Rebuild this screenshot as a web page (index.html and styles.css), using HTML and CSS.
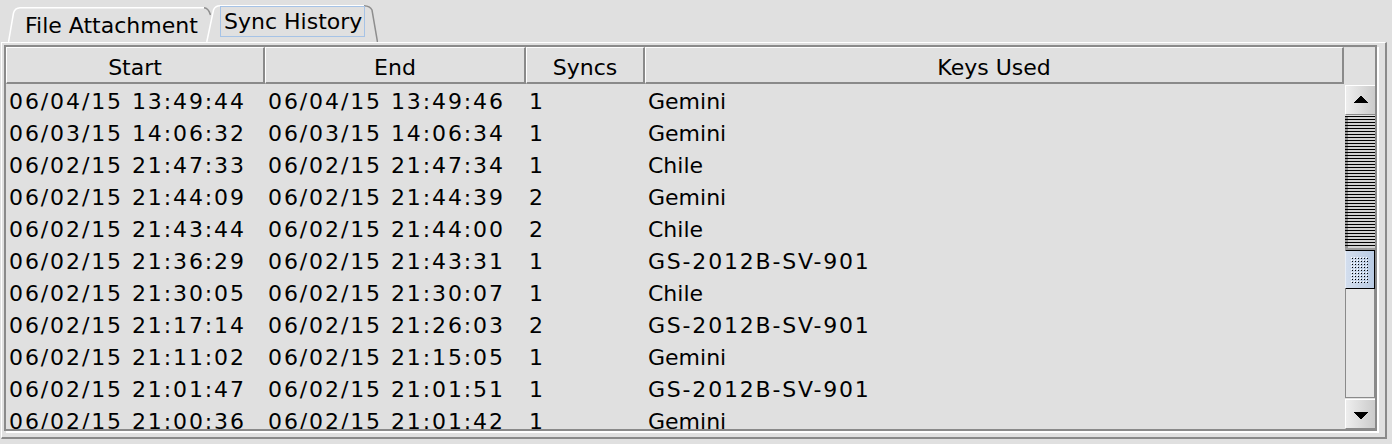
FILE: index.html
```html
<!DOCTYPE html>
<html>

<head>
  <meta charset="UTF-8">
  <meta name="viewport" content="width=device-width, initial-scale=1">
  <title>Sync History</title>
  <link rel="stylesheet" href="styles.css">
</head>

<body>
  <div class="tabs">
    <div class="tab">
      <svg class="tab-edge" width="203" height="35" viewBox="0 0 203 35">
        <path d="M0.5 35 L5.5 6 Q7 1 12 0.75 H196" fill="none" stroke="#fff" stroke-width="1.5"/>
        <path d="M196 0.75 Q200.5 1 202.5 8" fill="none" stroke="#8e8e8e" stroke-width="1.5"/>
      </svg>
      <span class="tab-label">File Attachment</span>
    </div>
    <div class="tab active">
      <svg class="tab-edge" width="172" height="37" viewBox="0 0 172 37">
        <path d="M0 37 L7 5 Q9 0 14 0 H158 Q164 0 166 5 L172 37 Z" fill="#e0e0e0"/>
        <path d="M0.75 37 L7.5 5 Q9 0.75 14 0.75 H158" fill="none" stroke="#fff" stroke-width="1.5"/>
        <path d="M158 0.75 Q164 1 166 5 L171.5 37" fill="none" stroke="#8e8e8e" stroke-width="1.5"/>
      </svg>
      <span class="tab-label focus">Sync History</span>
    </div>
  </div>

  <div class="panel">
    <div class="scrollpane">
      <div class="thead">
        <div class="th">Start</div>
        <div class="th">End</div>
        <div class="th">Syncs</div>
        <div class="th">Keys Used</div>
      </div>
      <div class="corner"></div>

      <div class="tbody">
        <div class="row"><div class="td t">06/04/15 13:49:44</div><div class="td t">06/04/15 13:49:46</div><div class="td">1</div><div class="td">Gemini</div></div>
        <div class="row"><div class="td t">06/03/15 14:06:32</div><div class="td t">06/03/15 14:06:34</div><div class="td">1</div><div class="td">Gemini</div></div>
        <div class="row"><div class="td t">06/02/15 21:47:33</div><div class="td t">06/02/15 21:47:34</div><div class="td">1</div><div class="td">Chile</div></div>
        <div class="row"><div class="td t">06/02/15 21:44:09</div><div class="td t">06/02/15 21:44:39</div><div class="td">2</div><div class="td">Gemini</div></div>
        <div class="row"><div class="td t">06/02/15 21:43:44</div><div class="td t">06/02/15 21:44:00</div><div class="td">2</div><div class="td">Chile</div></div>
        <div class="row"><div class="td t">06/02/15 21:36:29</div><div class="td t">06/02/15 21:43:31</div><div class="td">1</div><div class="td code">GS-2012B-SV-901</div></div>
        <div class="row"><div class="td t">06/02/15 21:30:05</div><div class="td t">06/02/15 21:30:07</div><div class="td">1</div><div class="td">Chile</div></div>
        <div class="row"><div class="td t">06/02/15 21:17:14</div><div class="td t">06/02/15 21:26:03</div><div class="td">2</div><div class="td code">GS-2012B-SV-901</div></div>
        <div class="row"><div class="td t">06/02/15 21:11:02</div><div class="td t">06/02/15 21:15:05</div><div class="td">1</div><div class="td">Gemini</div></div>
        <div class="row"><div class="td t">06/02/15 21:01:47</div><div class="td t">06/02/15 21:01:51</div><div class="td">1</div><div class="td code">GS-2012B-SV-901</div></div>
        <div class="row"><div class="td t">06/02/15 21:00:36</div><div class="td t">06/02/15 21:01:42</div><div class="td">1</div><div class="td">Gemini</div></div>
      </div>

      <div class="scrollbar">
        <div class="sb-btn">
          <svg width="16" height="7" viewBox="0 0 16 7" shape-rendering="crispEdges"><path d="M0 7 L8 0 L16 7 Z" fill="#000"/></svg>
        </div>
        <div class="sb-stripes"></div>
        <div class="sb-gap"></div>
        <div class="sb-grip">
          <svg width="18" height="26" viewBox="0 0 18 26" shape-rendering="crispEdges">
            <defs>
              <pattern id="dots" width="6" height="6" patternUnits="userSpaceOnUse">
                <rect x="0" y="0" width="1" height="1" fill="#fff"/>
                <rect x="1" y="1" width="1" height="1" fill="#000"/>
                <rect x="3" y="3" width="1" height="1" fill="#fff"/>
                <rect x="4" y="4" width="1" height="1" fill="#000"/>
                <rect x="3" y="0" width="1" height="1" fill="#fff"/>
                <rect x="4" y="1" width="1" height="1" fill="#000"/>
                <rect x="0" y="3" width="1" height="1" fill="#fff"/>
                <rect x="1" y="4" width="1" height="1" fill="#000"/>
              </pattern>
            </defs>
            <rect width="18" height="26" fill="url(#dots)"/>
          </svg>
        </div>
        <div class="sb-track"></div>
        <div class="sb-btn down">
          <svg width="16" height="7" viewBox="0 0 16 7" shape-rendering="crispEdges"><path d="M0 0 L16 0 L8 7 Z" fill="#000"/></svg>
        </div>
      </div>
    </div>
  </div>
</body>

</html>
```

FILE: styles.css
```css
*{
  box-sizing: border-box;
  margin: 0;
  padding: 0;
}

body{
  background: #e0e0e0;
  font-family: "DejaVu Sans", Verdana, sans-serif;
  font-size: 22px;
  color: #000;
  width: 1392px;
  height: 444px;
  overflow: hidden;
}

/* tab strip */
.tabs{
  display: flex;
  align-items: flex-end;
  height: 42px;
  padding-left: 8px;
}
.tab{
  position: relative;
  width: 203px;
  height: 35px;
  padding: 3px 0 0 17px;
  line-height: 32px;
  white-space: nowrap;
}
.tab.active{
  width: 172px;
  height: 37px;
  margin-left: -5px;
  padding: 1px 0 0 14px;
  line-height: 29px;
}
.tab-edge{
  position: absolute;
  left: 0;
  top: 0;
}
.tab-label{
  position: relative;
  display: inline-block;
}
.tab-label.focus{
  border: 1px solid #a6c3e6;
  height: 31px;
  width: 145px;
  padding-left: 3px;
}

/* content panel */
.panel{
  margin-left: 1px;
  width: 1386px;
  height: 397px;
  border-top: 1px solid #fff;
  border-left: 1px solid #fff;
  border-right: 2px solid #8a8a8a;
  border-bottom: 2px solid #8a8a8a;
  padding: 2px 0 0 2px;
}
.scrollpane{
  width: 1373px;
  height: 386px;
  border: 2px solid #8a8a8a;
  box-shadow: 2px 2px 0 #fff;
  display: grid;
  grid-template-columns: 1338px 31px;
  grid-template-rows: 37px 345px;
}

.thead, .row{
  display: grid;
  grid-template-columns: 259px 261px 119px 699px;
}
.th{
  height: 37px;
  border-top: 1px solid #fff;
  border-left: 1px solid #fff;
  border-right: 2px solid #8a8a8a;
  border-bottom: 2px solid #8a8a8a;
  padding-top: 6px;
  line-height: 28px;
  text-align: center;
}
.corner{
  background: #e0e0e0;
}

.tbody{
  overflow: hidden;
}
.row{
  height: 32px;
  line-height: 35px;
}
.td{
  padding-left: 3px;
  white-space: nowrap;
  overflow: hidden;
}
.td.t{
  letter-spacing: 1.9px;
}
.td.code{
  letter-spacing: 1.8px;
}

/* scrollbar */
.scrollbar{
  display: flex;
  flex-direction: column;
  padding: 1px 0 0 1px;
}
.sb-btn{
  height: 30px;
  flex: none;
  display: flex;
  align-items: center;
  justify-content: center;
  padding-bottom: 2px;
  border-top: 1px solid #fff;
  border-left: 1px solid #fff;
  border-bottom: 1px solid #8a8a8a;
  background: linear-gradient(to right, #eeeeee, #cbcbcb);
}
.sb-btn.down{
  margin-top: 1px;
  padding: 2px 0 0 0;
}
.sb-stripes{
  height: 132px;
  flex: none;
  margin-top: 1px;
  background:
    linear-gradient(to right, rgba(0,0,0,.3) 0 3px, transparent 3px),
    repeating-linear-gradient(to bottom, #000 0 1px, #d2d2d2 1px 3px);
}
.sb-gap{
  height: 2px;
  flex: none;
  background: #9a9a9a;
}
.sb-grip{
  height: 39px;
  flex: none;
  display: flex;
  align-items: center;
  justify-content: center;
  border-top: 1px solid #000;
  border-right: 1px solid #000;
  border-bottom: 1px solid #000;
  border-left: 1px solid #e8eef7;
  background: linear-gradient(to right, #d3deee, #b9cbe3);
}
.sb-track{
  flex: 1;
  background: #e6e6e6;
  border-left: 1px solid #8a8a8a;
  border-right: 1px solid #8a8a8a;
  border-bottom: 1px solid #8a8a8a;
}
```
